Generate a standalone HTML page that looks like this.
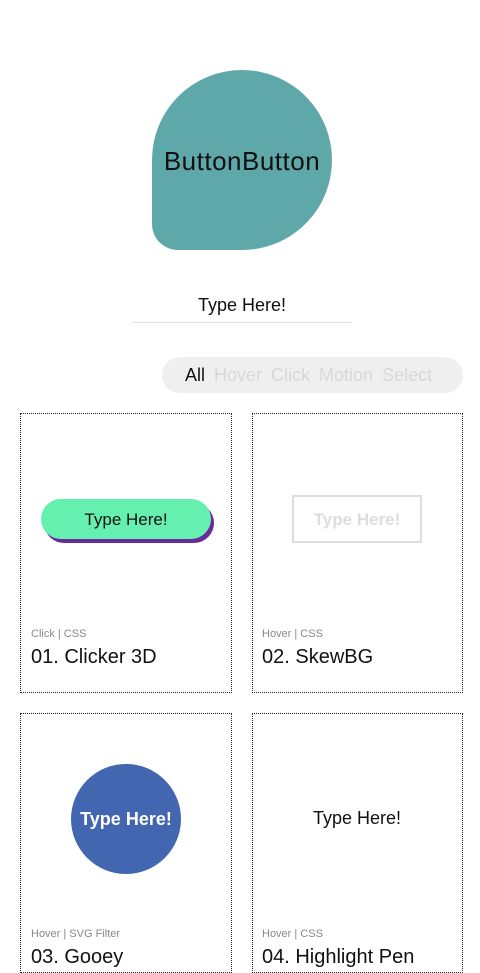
<!DOCTYPE html>
<html><head><meta charset="utf-8"><style>
*{margin:0;padding:0;box-sizing:border-box}
body{width:480px;height:959px;overflow:hidden;background:#fff;font-family:"Liberation Sans",sans-serif;position:relative;color:#111}
.abs{position:absolute}
.blob{left:152px;top:70px;width:180px;height:180px;background:#5fa8aa;border-radius:90px 90px 90px 26px;display:flex;align-items:center;justify-content:center;font-size:26px;color:#111;letter-spacing:0.5px;padding-top:2px}
.inp{left:133px;top:295px;width:218px;height:28px;border-bottom:1px solid #ddd;text-align:center;font-size:18px}
.pill{left:162px;top:357px;width:301px;height:36px;background:#efefef;border-radius:18px;font-size:18px;line-height:36px;padding-left:23px;color:#d8d8d8;word-spacing:4px;white-space:nowrap}
.pill b{color:#111;font-weight:normal}
.card{width:212px;height:280px;border:1px dotted #222}
.lab{font-size:11px;color:#888}
.tit{font-size:20px;color:#111}
</style></head><body>
<div class="abs blob">ButtonButton</div>
<div class="abs inp">Type Here!</div>
<div class="abs pill"><b>All</b> Hover Click Motion Select</div>

<div class="abs card" style="left:20px;top:413px"></div>
<div class="abs card" style="left:252px;top:413px;width:211px"></div>
<div class="abs card" style="left:20px;top:713px;height:260px"></div>
<div class="abs card" style="left:252px;top:713px;height:260px;width:211px"></div>

<div class="abs" style="left:44px;top:503px;width:170px;height:40px;border-radius:20px;background:#6a2a9a"></div>
<div class="abs" style="left:41px;top:499px;width:170px;height:40px;border-radius:20px;background:#66f0b0;text-align:center;line-height:41px;font-size:17px">Type Here!</div>

<div class="abs" style="left:292px;top:495px;width:130px;height:48px;border:2px solid #ddd;text-align:center;line-height:46px;font-size:17px;color:#ddd;font-weight:bold">Type Here!</div>

<div class="abs" style="left:71px;top:764px;width:110px;height:110px;border-radius:50%;background:#4266b0;color:#fff;font-weight:bold;font-size:18px;text-align:center;line-height:110px">Type Here!</div>
<div class="abs" style="left:262px;top:808px;width:190px;text-align:center;font-size:18px">Type Here!</div>

<div class="abs lab" style="left:31px;top:628px">Click | CSS</div>
<div class="abs tit" style="left:31px;top:646px">01. Clicker 3D</div>
<div class="abs lab" style="left:262px;top:628px">Hover | CSS</div>
<div class="abs tit" style="left:262px;top:646px">02. SkewBG</div>
<div class="abs lab" style="left:31px;top:928px">Hover | SVG Filter</div>
<div class="abs tit" style="left:31px;top:946px">03. Gooey</div>
<div class="abs lab" style="left:262px;top:928px">Hover | CSS</div>
<div class="abs tit" style="left:262px;top:946px">04. Highlight Pen</div>
</body></html>
